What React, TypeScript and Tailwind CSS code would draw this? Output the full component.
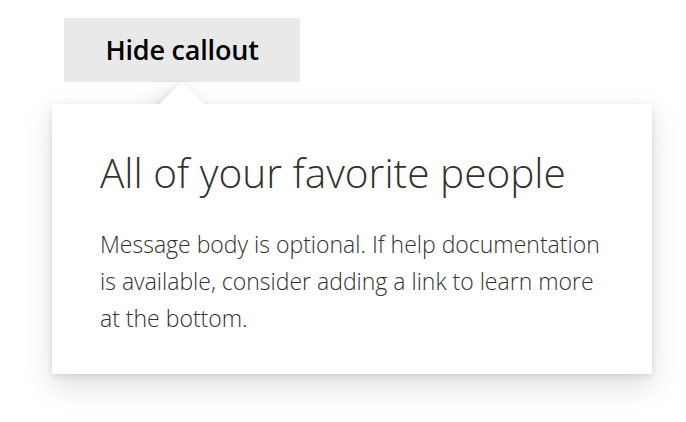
import React from "react";

export default function App() {
  return (
    <div className="min-h-[422px] w-[686px] bg-white font-['Open_Sans',sans-serif] text-[#323130]">
      <div className="pt-[18px] pl-[64px]">
        <button className="flex h-[64px] w-[236px] items-center justify-center bg-[#e9e9e9] text-[27px] font-semibold tracking-[-0.2px] text-black">
          Hide callout
        </button>
      </div>
      <div className="relative ml-[52px] mt-[22px] h-[270px] w-[600px] shadow-[0_12px_28px_0_rgba(0,0,0,0.13),0_2px_7px_0_rgba(0,0,0,0.1)]">
        <div className="absolute left-[114px] top-[-16px] h-[32px] w-[32px] rotate-45 bg-white shadow-[0_12px_28px_0_rgba(0,0,0,0.13),0_2px_7px_0_rgba(0,0,0,0.1)]" />
        <div className="relative z-10 h-full w-full bg-white pl-[48px] pt-[45px]">
          <h2 className="text-[40.6px] font-[350] leading-[48px]">
            All of your favorite people
          </h2>
          <p className="mt-[29px] whitespace-nowrap text-[23px] font-[350] leading-[37px]">
            Message body is optional. If help documentation
            <br />
            is available, consider adding a link to learn more
            <br />
            at the bottom.
          </p>
        </div>
      </div>
    </div>
  );
}
